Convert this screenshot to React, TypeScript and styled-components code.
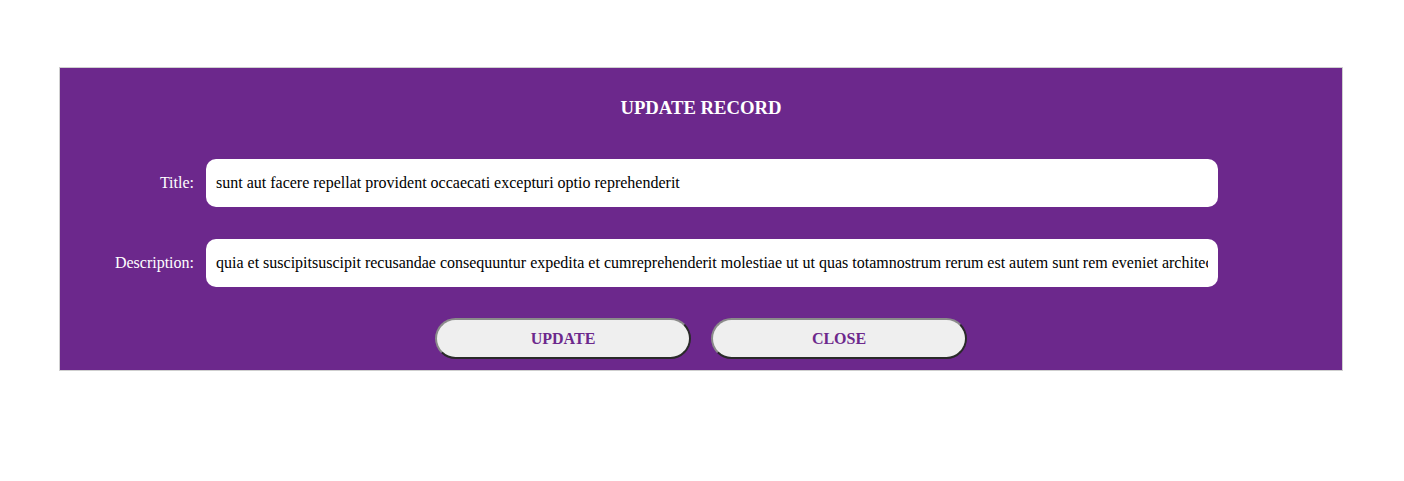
import React from "react";
import styled, { createGlobalStyle } from "styled-components";

const Global = createGlobalStyle`
  * { box-sizing: border-box; }
  html, body { margin: 0; padding: 0; background: #ffffff; }
  body { font-family: "Liberation Serif", "Times New Roman", serif; }
`;

const Panel = styled.div`
  margin: 67px 0 0 59px;
  width: 1284px;
  background: #6c288c;
  border: 1px solid #cfcfcf;
  padding: 29px 0 11px;
  display: flex;
  flex-direction: column;
`;

const Heading = styled.h3`
  margin: 0 0 40px;
  text-align: center;
  color: #ffffff;
  font-size: 18.72px;
  line-height: 22px;
  font-weight: bold;
`;

const Form = styled.div`
  display: grid;
  grid-template-columns: 134px 1012px;
  column-gap: 12px;
  row-gap: 32px;
  align-items: center;
`;

const Label = styled.label`
  text-align: right;
  color: #ffffff;
  font-size: 16px;
`;

const Field = styled.input`
  height: 48px;
  border: none;
  border-radius: 10px;
  background: #ffffff;
  padding: 0 10px;
  font-family: "Liberation Serif", "Times New Roman", serif;
  font-size: 16px;
  color: #000000;
  outline: none;
`;

const Actions = styled.div`
  margin-top: 31px;
  display: flex;
  justify-content: center;
  gap: 20px;
`;

const Button = styled.button`
  width: 256px;
  height: 41px;
  border-radius: 21px;
  border: 2px solid;
  border-color: #8a8a8a #2a2a2a #2a2a2a #8a8a8a;
  background: #efefef;
  color: #6c288c;
  font-family: "Liberation Serif", "Times New Roman", serif;
  font-weight: bold;
  font-size: 16px;
  cursor: pointer;
`;

export default function App() {
  return (
    <>
      <Global />
      <Panel>
        <Heading>UPDATE RECORD</Heading>
        <Form>
          <Label>Title:</Label>
          <Field defaultValue="sunt aut facere repellat provident occaecati excepturi optio reprehenderit" />
          <Label>Description:</Label>
          <Field defaultValue="quia et suscipitsuscipit recusandae consequuntur expedita et cumreprehenderit molestiae ut ut quas totamnostrum rerum est autem sunt rem eveniet architecto" />
        </Form>
        <Actions>
          <Button>UPDATE</Button>
          <Button>CLOSE</Button>
        </Actions>
      </Panel>
    </>
  );
}
